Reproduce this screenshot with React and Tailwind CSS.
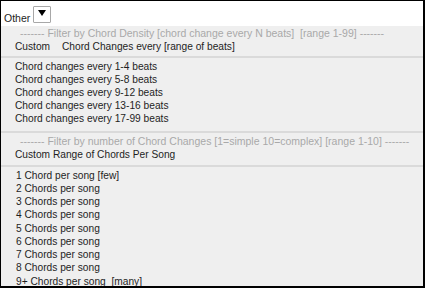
export default function App() {
  const font = { fontFamily: '"Liberation Sans", Arial, sans-serif' };
  const beats = ["1-4", "5-8", "9-12", "13-16", "17-99"];
  const chords = [
    "1 Chord per song [few]",
    "2 Chords per song",
    "3 Chords per song",
    "4 Chords per song",
    "5 Chords per song",
    "6 Chords per song",
    "7 Chords per song",
    "8 Chords per song",
    "9+ Chords per song  [many]",
  ];
  return (
    <div
      className="w-[425px] h-[288px] overflow-hidden border-t border-l border-r-2 border-b-2 border-black bg-[#efefef] text-[10.2px] text-[#1e1e1e] flex flex-col whitespace-pre"
      style={font}
    >
      <div className="h-[25px] shrink-0 bg-white flex items-start pl-[3px] pt-[5px] gap-[3px]">
        <span className="leading-[13px] mt-[6px] text-[10.5px]">Other</span>
        <div className="w-[18px] h-[17px] border border-[#a8a8a8] bg-white flex items-center justify-center rounded-[1px]">
          <svg width="8" height="6" viewBox="0 0 8 6" className="mb-[3px]">
            <polygon points="0,0 8,0 4,6" fill="#000" />
          </svg>
        </div>
      </div>
      <div className="flex flex-col leading-[13px] pt-[1px]">
        <div className="pl-[19px] text-[#a9a9a9] text-[10.5px]">------- Filter by Chord Density [chord change every N beats]  [range 1-99] -------</div>
        <div className="pl-[14px] flex">
          <span className="w-[47px]">Custom</span>
          <span>Chord Changes every [range of beats]</span>
        </div>
      </div>
      <div className="mt-[3px] h-[2px] bg-[#dadada] shrink-0" />
      <div className="flex flex-col leading-[12.9px] pt-[3px] pl-[14px]">
        {beats.map((b) => (
          <div key={b}>Chord changes every {b} beats</div>
        ))}
      </div>
      <div className="mt-[5px] h-[2px] bg-[#dadada] shrink-0" />
      <div className="flex flex-col leading-[13px] pt-[2px]">
        <div className="pl-[19px] text-[#a9a9a9] text-[10.5px]">------- Filter by number of Chord Changes [1=simple 10=complex] [range 1-10] -------</div>
        <div className="pl-[14px]">Custom Range of Chords Per Song</div>
      </div>
      <div className="mt-[4px] h-[2px] bg-[#dadada] shrink-0" />
      <div className="flex flex-col leading-[13.25px] pt-[2px] pl-[15px]">
        {chords.map((c) => (
          <div key={c}>{c}</div>
        ))}
      </div>
    </div>
  );
}
